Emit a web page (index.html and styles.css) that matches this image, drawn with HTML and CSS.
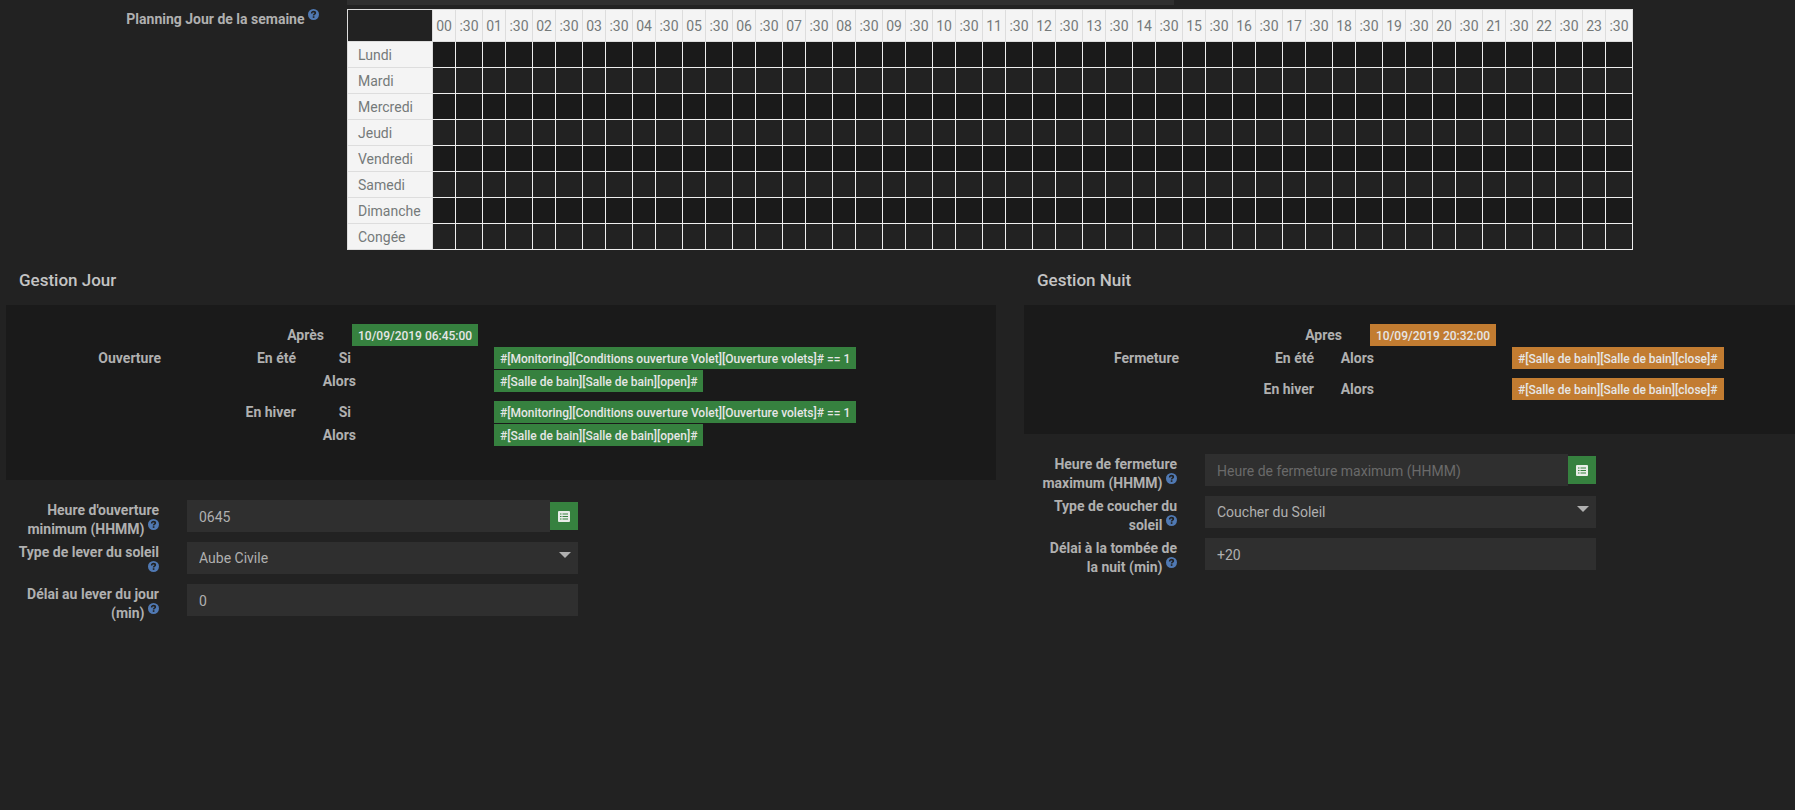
FILE: index.html
```html
<!DOCTYPE html>
<html lang="fr">
<head>
<meta charset="utf-8">
<title>Gestion des volets</title>
<link rel="stylesheet" href="styles.css">
</head>
<body>
<svg class="defs" aria-hidden="true">
  <symbol id="help" viewBox="0 0 12 12"><circle cx="6" cy="6" r="6" fill="#5079b3"/><path d="M4 4.8C4 3.4 4.8 2.8 6 2.8s2 .6 2 1.6c0 1.3-1.9 1.2-1.9 2.7" fill="none" stroke="#222" stroke-width="1.8"/><rect x="5.2" y="7.9" width="1.8" height="1.8" fill="#222"/></symbol>
  <symbol id="list" viewBox="0 0 12 11"><rect width="12" height="11" rx="1" fill="#e8ece8"/><path d="M2 3h1.5M4.5 3H10M2 5.5h1.5M4.5 5.5H10M2 8h1.5M4.5 8H10" stroke="#36813f" stroke-width="1.2"/></symbol>
</svg>
<main class="page">
  <section class="planning">
    <div class="planning-label"><span>Planning Jour de la semaine</span> <sup><svg class="help"><use href="#help"/></svg></sup></div>
    <div class="planning-body">
      <div class="field-tail"></div>
      <table class="week">
        <colgroup id="cols"><col class="col-day"></colgroup>
        <thead><tr id="hours"><td></td></tr></thead>
        <tbody id="days"></tbody>
      </table>
    </div>
  </section>
  <div class="columns">
    <section class="column">
      <h2 class="title">Gestion Jour</h2>
      <div class="panel green">
        <div class="line after"><b>Après</b><span class="badge">10/09/2019 06:45:00</span></div>
        <div class="line"><b>Ouverture</b><b>En été</b><b class="si">Si</b><span class="badge">#[Monitoring][Conditions ouverture Volet][Ouverture volets]# == 1</span></div>
        <div class="line"><b></b><b></b><b class="alors">Alors</b><span class="badge">#[Salle de bain][Salle de bain][open]#</span></div>
        <div class="line season"><b></b><b>En hiver</b><b class="si">Si</b><span class="badge">#[Monitoring][Conditions ouverture Volet][Ouverture volets]# == 1</span></div>
        <div class="line"><b></b><b></b><b class="alors">Alors</b><span class="badge">#[Salle de bain][Salle de bain][open]#</span></div>
      </div>
      <form class="form">
        <div class="row"><label for="open-min">Heure d'ouverture minimum (HHMM) <sup><svg class="help"><use href="#help"/></svg></sup></label>
          <div class="group"><input id="open-min" class="control" type="text" value="0645"><button type="button" class="pick" aria-label="Choisir"><svg class="list"><use href="#list"/></svg></button></div></div>
        <div class="row"><label for="sunrise">Type de lever du soleil <sup><svg class="help"><use href="#help"/></svg></sup></label>
          <div class="group select"><select id="sunrise" class="control"><option>Aube Civile</option></select></div></div>
        <div class="row"><label for="delay-day">Délai au lever du jour (min) <sup><svg class="help"><use href="#help"/></svg></sup></label>
          <div class="group"><input id="delay-day" class="control" type="text" value="0"></div></div>
      </form>
    </section>
    <section class="column">
      <h2 class="title">Gestion Nuit</h2>
      <div class="panel orange">
        <div class="line after"><b>Apres</b><span class="badge">10/09/2019 20:32:00</span></div>
        <div class="line"><b>Fermeture</b><b>En été</b><b class="alors">Alors</b><span class="badge">#[Salle de bain][Salle de bain][close]#</span></div>
        <div class="line season"><b></b><b>En hiver</b><b class="alors">Alors</b><span class="badge">#[Salle de bain][Salle de bain][close]#</span></div>
      </div>
      <form class="form">
        <div class="row"><label for="close-max">Heure de fermeture maximum (HHMM) <sup><svg class="help"><use href="#help"/></svg></sup></label>
          <div class="group"><input id="close-max" class="control" type="text" placeholder="Heure de fermeture maximum (HHMM)"><button type="button" class="pick" aria-label="Choisir"><svg class="list"><use href="#list"/></svg></button></div></div>
        <div class="row"><label for="sunset">Type de coucher du soleil <sup><svg class="help"><use href="#help"/></svg></sup></label>
          <div class="group select"><select id="sunset" class="control"><option>Coucher du Soleil</option></select></div></div>
        <div class="row"><label for="delay-night">Délai à la tombée de la&nbsp;nuit (min) <sup><svg class="help"><use href="#help"/></svg></sup></label>
          <div class="group"><input id="delay-night" class="control" type="text" value="+20"></div></div>
      </form>
    </section>
  </div>
</main>
<script src="planning.js"></script>
</body>
</html>
```

FILE: styles.css
```css
* { box-sizing: border-box; }
html { background: #222; }
body {
  margin: 0;
  color: #b0b0b0;
  font: 14px/19px Roboto, "Open Sans", sans-serif;
}
.page { padding-bottom: 20px; }
.defs { position: absolute; width: 0; height: 0; }
sup { line-height: 0; vertical-align: 6px; font-size: 11px; }
.help { width: 11px; height: 11px; margin-top: -3px; vertical-align: -2px; }

.planning { display: grid; grid-template-columns: 319px 1fr; column-gap: 28px; }
.planning-label { padding-top: 10px; text-align: right; font-weight: 700; }
.field-tail { width: 827px; max-width: 100%; height: 5px; margin-bottom: 4px; background: #2f2f2f; }

.week { border-collapse: collapse; table-layout: fixed; width: 1286px; border: 1px solid #ccc; color: #757a7a; }
.col-day { width: 85px; }
.col-hour { width: 23px; }
.col-half { width: 27px; }
.week td, .week th { padding: 0; border: 1px solid #ddd; font-weight: 400; }
.week thead tr { height: 32px; }
.week tbody tr { height: 26px; }
.week th { padding-top: 2px; background: #f4f4f4; text-align: center; white-space: nowrap; }
.week tbody th { padding-left: 10px; text-align: left; }
.week tbody td { border-color: #eee; }
.week tbody tr:nth-child(odd) { background: #1a1a1a; }

.columns { display: grid; grid-template-columns: 1018fr 777fr; padding-top: 20px; }
.column { min-width: 0; }
.title { margin: 0; padding: 0 19px; font-size: 17px; font-weight: 500; line-height: 20px; color: #c4c4c4; }
.panel { margin: 15px 22px 20px 6px; padding: 19px 0 33px; background: #1a1a1a; }
.column + .column .panel { margin-right: 0; }
.line { display: grid; grid-template-columns: 155px 135px 65px 1fr; height: 23px; line-height: 22px; text-align: right; white-space: nowrap; }
.line.after { grid-template-columns: 318px 1fr; column-gap: 28px; }
.line.season { margin-top: 8px; }
.si { padding-right: 10px; }
.alors { padding-right: 5px; }
.badge { justify-self: start; height: 22px; padding: 0 6px; line-height: 24px; font-size: 12px; font-weight: 500; color: #e6e6e6; }
.line:not(.after) .badge { margin-left: 133px; }
.green .badge { background: #36813f; }
.orange .badge { background: #c27c31; }

.form { display: grid; row-gap: 4px; }
.row { display: grid; grid-template-columns: 142px 391px; column-gap: 28px; align-items: start; height: 38px; padding-left: 17px; }
.row label { padding-top: 1px; text-align: right; font-weight: 700; }
.group { position: relative; display: flex; align-items: center; }
.control { flex: 1; min-width: 0; height: 32px; margin: 0; padding: 0 12px; border: 0; border-radius: 0; background: #2f2f2f; color: #b0b0b0; font: inherit; appearance: none; }
input.control { padding-top: 2px; }
.control::placeholder { color: #6a6a6a; opacity: 1; }
.select::after { content: ""; position: absolute; right: 7px; top: 10px; border: 6px solid transparent; border-top-color: #b0b0b0; border-bottom: 0; pointer-events: none; }
.pick { display: grid; place-items: center; width: 28px; height: 28px; padding: 0; border: 0; background: #36813f; }
.list { width: 12px; height: 11px; }
```

FILE: planning.js
```js
const days = ["Lundi", "Mardi", "Mercredi", "Jeudi", "Vendredi", "Samedi", "Dimanche", "Congée"];
const cols = document.getElementById("cols");
const hours = document.getElementById("hours");
for (let h = 0; h < 24; h++) {
  cols.insertAdjacentHTML("beforeend", '<col class="col-hour"><col class="col-half">');
  hours.insertAdjacentHTML("beforeend", `<th scope="col">${String(h).padStart(2, "0")}</th><th scope="col">:30</th>`);
}
document.getElementById("days").innerHTML = days
  .map((d) => `<tr><th scope="row">${d}</th>${"<td></td>".repeat(48)}</tr>`)
  .join("");
```
